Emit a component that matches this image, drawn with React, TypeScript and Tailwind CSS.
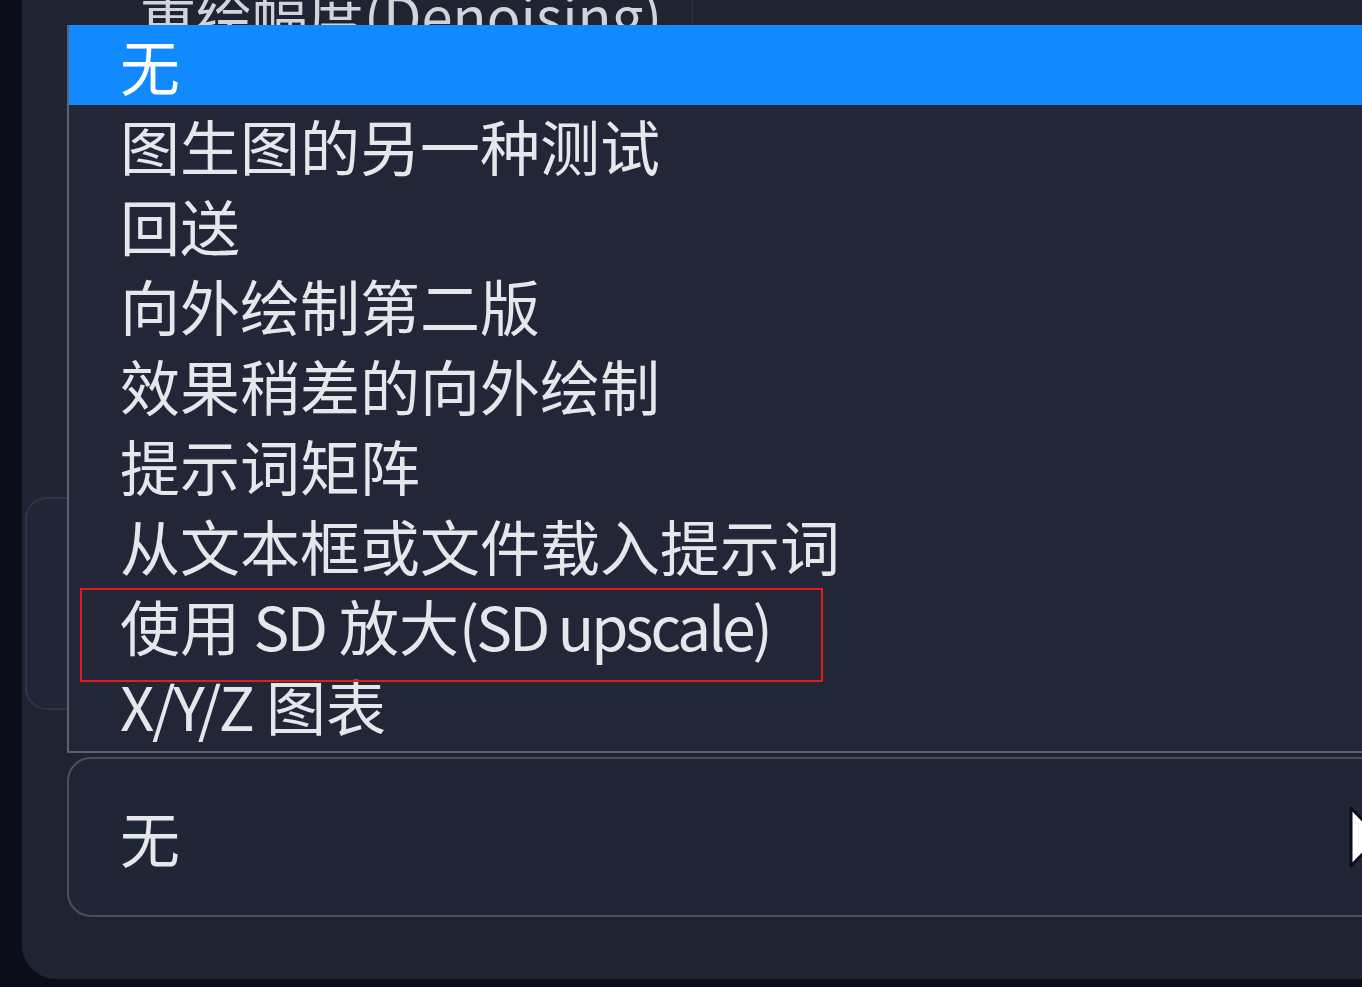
import React from "react";

const L = ({ children }: { children: React.ReactNode }) => (
  <span className="tracking-[-2.5px]">{children}</span>
);

const items: React.ReactNode[] = [
  "无",
  "图生图的另一种测试",
  "回送",
  "向外绘制第二版",
  "效果稍差的向外绘制",
  "提示词矩阵",
  "从文本框或文件载入提示词",
  <>
    使用 <L>SD</L> 放大<span className="tracking-[-3px]">(SD upscale)</span>
  </>,
  <>
    <L>X/Y/Z</L> 图表
  </>,
];

export default function App() {
  return (
    <div
      className="relative w-[1362px] h-[987px] overflow-hidden bg-[#0b0e18]"
      style={{ fontFamily: '"Noto Sans CJK SC", "Noto Sans", sans-serif' }}
    >
      {/* panel */}
      <div className="relative ml-[22px] flex h-[979px] w-[1400px] flex-col rounded-b-[34px] bg-[#1f2433]">
        {/* background label, cut at top */}
        <div className="relative flex h-[25px] items-end overflow-hidden">
          <div className="mb-[-19px] ml-[118px] whitespace-nowrap text-[56px] leading-[60px] text-[#d1d5db]">
            重绘幅度(Denoising)
          </div>
          <div className="ml-[30px] h-[25px] w-px self-start bg-[#2c3242]" />
        </div>

        {/* faint box behind the dropdown */}
        <div className="ml-[3px] mt-[472px] h-[213px] w-[300px] rounded-[22px] border-2 border-[#2f3546] bg-[#212636]" />

        {/* select box */}
        <div className="ml-[45px] mt-[47px] flex h-[160px] w-[1320px] items-center justify-between rounded-[24px] border-2 border-[#4a5060] bg-[#212636] pl-[51px] pr-[4px]">
          <span className="text-[60px] leading-[80px] text-[#e5e7eb]">无</span>
          <svg width="34" height="66" viewBox="0 0 34 66">
            <path d="M4 4 L32 33 L4 62 Z" fill="#ffffff" stroke="#0b0e18" strokeWidth="3" strokeLinejoin="round" />
          </svg>
        </div>
      </div>

      {/* dropdown list overlay */}
      <div className="absolute left-[67px] top-[25px] flex w-[1320px] flex-col border-x-2 border-b-2 border-[#5b6170] bg-[#222637] pb-[6px]">
        {items.map((t, i) => (
          <div
            key={i}
            className={
              i === 0
                ? "h-[80px] whitespace-nowrap bg-[#118aff] pl-[51px] text-[60px] leading-[80px] text-white"
                : "h-[80px] whitespace-nowrap pl-[51px] text-[60px] leading-[80px] text-[#e5e7eb]"
            }
          >
            {t}
          </div>
        ))}
      </div>

      {/* red annotation box */}
      <div className="absolute left-[80px] top-[588px] h-[94px] w-[743px] border-2 border-[#e31b23]" />
    </div>
  );
}
